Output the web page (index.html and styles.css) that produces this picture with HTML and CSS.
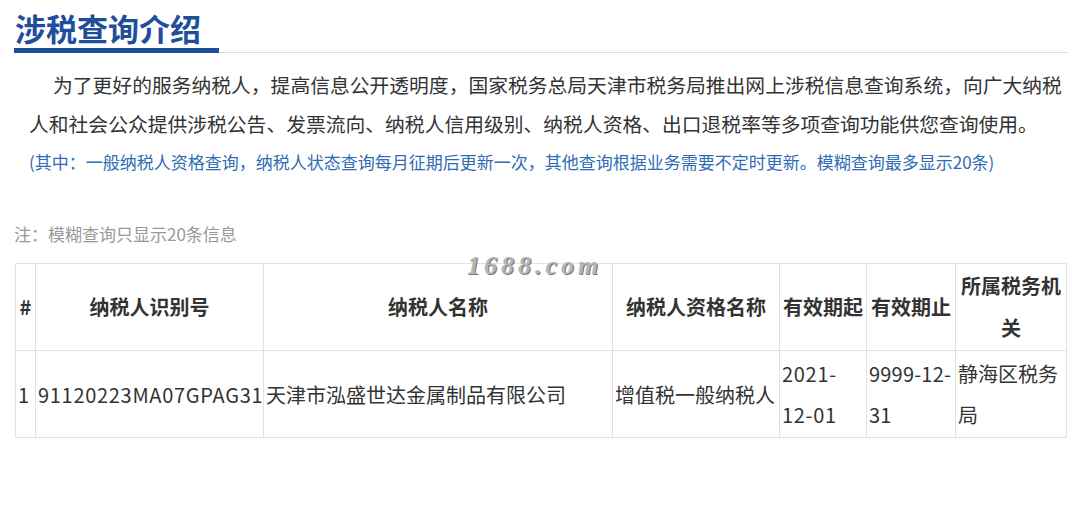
FILE: index.html
```html
<!DOCTYPE html>
<html lang="zh-CN">
<head>
    <meta charset="UTF-8">
    <meta name="viewport" content="width=device-width, initial-scale=1.0">
    <title>涉税查询介绍</title>
    <link rel="stylesheet" href="styles.css">
</head>
<body>
    <div class="page">
        <h2 class="section-title"><span>涉税查询介绍</span></h2>
        <div class="intro">
            <p class="intro-text">为了更好的服务纳税人，提高信息公开透明度，国家税务总局天津市税务局推出网上涉税信息查询系统，向广大纳税人和社会公众提供涉税公告、发票流向、纳税人信用级别、纳税人资格、出口退税率等多项查询功能供您查询使用。</p>
            <p class="intro-note">(其中：一般纳税人资格查询，纳税人状态查询每月征期后更新一次，其他查询根据业务需要不定时更新。模糊查询最多显示20条)</p>
        </div>
        <p class="tip">注：模糊查询只显示20条信息</p>
        <div class="result">
            <div class="watermark">1688.com</div>
            <table class="result-table">
                <colgroup>
                    <col style="width: 20px">
                    <col style="width: 228px">
                    <col style="width: 349px">
                    <col style="width: 167px">
                    <col style="width: 87px">
                    <col style="width: 89px">
                    <col style="width: 111px">
                </colgroup>
                <thead>
                    <tr>
                        <th>#</th>
                        <th>纳税人识别号</th>
                        <th>纳税人名称</th>
                        <th>纳税人资格名称</th>
                        <th>有效期起</th>
                        <th>有效期止</th>
                        <th>所属税务机关</th>
                    </tr>
                </thead>
                <tbody>
                    <tr>
                        <td>1</td>
                        <td class="num">91120223MA07GPAG31</td>
                        <td>天津市泓盛世达金属制品有限公司</td>
                        <td>增值税一般纳税人</td>
                        <td class="num">2021-12-01</td>
                        <td class="num num-tight">9999-12-31</td>
                        <td>静海区税务局</td>
                    </tr>
                </tbody>
            </table>
        </div>
    </div>
</body>
</html>
```

FILE: styles.css
```css
body {
    margin: 0;
    background-color: #fff;
    color: #333;
    font-family: "Noto Sans CJK SC", "Noto Sans", sans-serif;
}
.page {
    padding: 0 1px 0 14px;
}
.section-title {
    display: flex;
    margin: 10px 0 0;
    border-bottom: 1px solid #ddd;
    font-size: 31px;
    line-height: 36px;
    font-weight: bold;
    color: #1f4f9b;
}
.section-title span {
    padding: 0 18px 2px 1px;
    border-bottom: 5px solid #1f4f9b;
    margin-bottom: -1px;
}
.intro {
    margin-top: 12px;
    padding-left: 15px;
}
.intro-text {
    margin: 0;
    font-size: 19.8px;
    line-height: 39px;
    text-indent: 24px;
    color: #333;
}
.intro-note {
    margin: 0;
    font-size: 17px;
    line-height: 38px;
    color: #2f6cb3;
}
.tip {
    margin: 38px 0 0;
    font-size: 17px;
    line-height: 30px;
    color: #999;
}
.result {
    position: relative;
    margin-top: 14px;
    padding-left: 1px;
}
.watermark {
    position: absolute;
    left: 453px;
    top: -12px;
    font-family: "Liberation Serif", serif;
    font-style: italic;
    font-weight: bold;
    font-size: 26px;
    letter-spacing: 4px;
    color: #b5b5b5;
    text-shadow: 1px 1px 0 #777;
}
.result-table {
    width: 1051px;
    table-layout: fixed;
    border-collapse: collapse;
    font-size: 20px;
}
.result-table th,
.result-table td {
    border: 1px solid #e2e2e2;
    padding: 2px;
    vertical-align: middle;
}
.result-table th {
    line-height: 42px;
    padding: 1px 2px;
    font-weight: bold;
    text-align: center;
    color: #333;
}
.result-table td {
    line-height: 41px;
    text-align: left;
    color: #333;
}
.result-table td.num {
    letter-spacing: 0.7px;
}
.result-table td.num-tight {
    letter-spacing: 0.2px;
}
```
